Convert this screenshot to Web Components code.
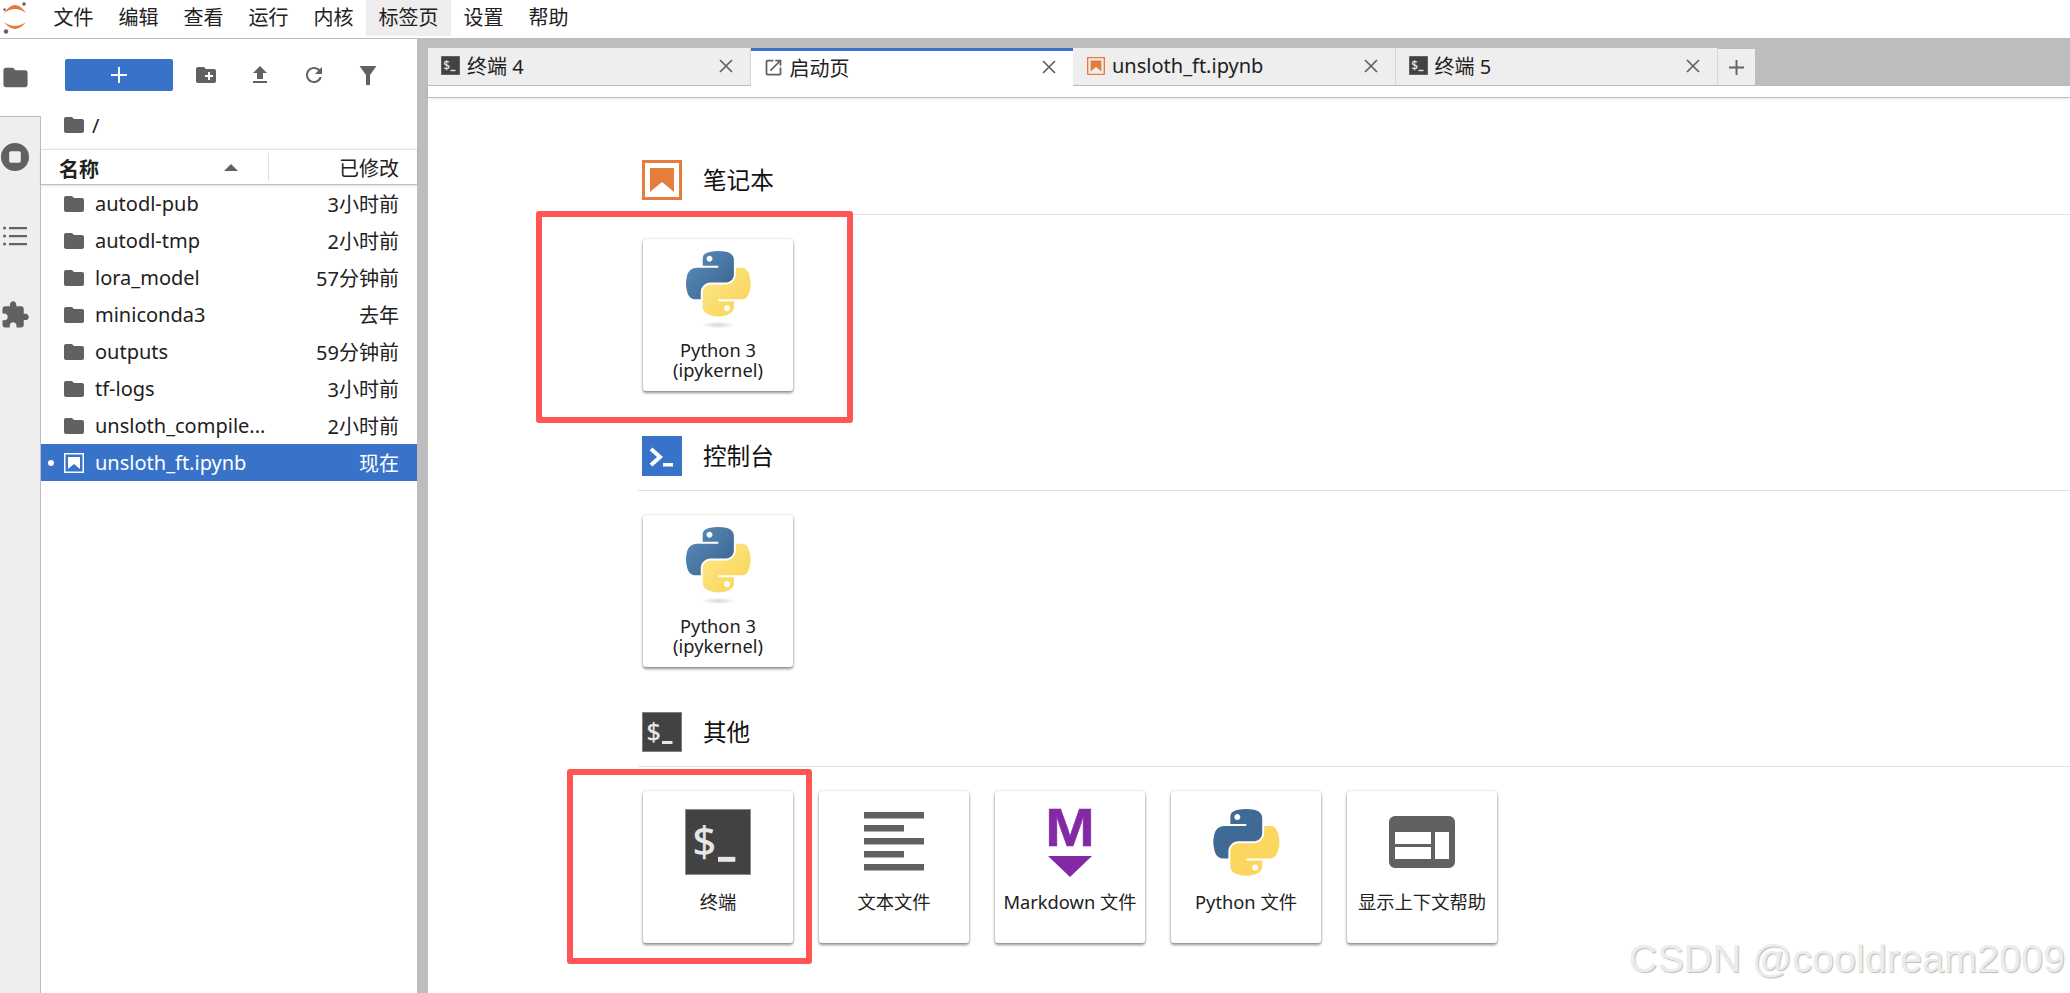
<!DOCTYPE html>
<html lang="zh">
<head>
<meta charset="utf-8">
<title>JupyterLab</title>
<style>
  html, body { margin: 0; height: 100%; }
  body {
    overflow: hidden;
    background: #fff;
    color: #212121;
    font-family: "Noto Sans", "Noto Sans CJK SC", sans-serif;
    font-size: 20px;
  }
</style>
</head>
<body>
<script>
const PY_BLUE = 'M54.92 0C50.34.02 45.96.41 42.11 1.09 30.76 3.1 28.7 7.29 28.7 15.03V25.25H55.51V28.66H18.64C10.85 28.66 4.02 33.34 1.89 42.25-.57 52.46-.68 58.84 1.89 69.5 3.79 77.44 8.35 83.09 16.14 83.09H25.36V70.84C25.36 62 33.01 54.19 42.11 54.19H68.89C76.34 54.19 82.29 48.05 82.29 40.56V15.03C82.29 7.77 76.16 2.31 68.89 1.09 64.28.33 59.5-.02 54.92 0ZM40.42 8.22C43.19 8.22 45.45 10.52 45.45 13.34 45.45 16.16 43.19 18.44 40.42 18.44 37.64 18.44 35.39 16.16 35.39 13.34 35.39 10.52 37.64 8.22 40.42 8.22Z';
const PY_YELLOW = 'M85.64 28.66V40.56C85.64 49.79 77.81 57.56 68.89 57.56H42.11C34.77 57.56 28.7 63.84 28.7 71.19V96.72C28.7 103.99 35.02 108.26 42.11 110.34 50.59 112.84 58.73 113.29 68.89 110.34 75.64 108.39 82.29 104.46 82.29 96.72V86.5H55.51V83.09H95.7C103.49 83.09 106.4 77.66 109.11 69.5 111.91 61.1 111.79 53.02 109.11 42.25 107.18 34.49 103.5 28.66 95.7 28.66ZM70.58 93.31C73.35 93.31 75.61 95.59 75.61 98.41 75.61 101.23 73.35 103.53 70.58 103.53 67.81 103.53 65.54 101.23 65.54 98.41 65.54 95.59 67.81 93.31 70.58 93.31Z';

const ICONS = {
  folder: `<svg viewBox="0 0 24 24"><path fill="#616161" d="M10 4H4c-1.1 0-2 .9-2 2v12c0 1.1.9 2 2 2h16c1.1 0 2-.9 2-2V8c0-1.1-.9-2-2-2h-8l-2-2z"/></svg>`,
  newfolder: `<svg viewBox="0 0 24 24"><path fill="#616161" d="M20 6h-8l-2-2H4c-1.11 0-2 .89-2 2v12c0 1.11.89 2 2 2h16c1.11 0 2-.89 2-2V8c0-1.11-.89-2-2-2zm-1 8h-3v3h-2v-3h-3v-2h3V9h2v3h3v2z"/></svg>`,
  upload: `<svg viewBox="0 0 24 24"><path fill="#616161" d="M9 16h6v-6h4l-7-7-7 7h4zm-4 2h14v2H5z"/></svg>`,
  refresh: `<svg viewBox="0 0 24 24"><path fill="#616161" d="M17.65 6.35C16.2 4.9 14.21 4 12 4c-4.42 0-7.99 3.58-7.99 8s3.57 8 7.99 8c3.73 0 6.84-2.55 7.73-6h-2.08c-.82 2.33-3.04 4-5.65 4-3.31 0-6-2.69-6-6s2.69-6 6-6c1.66 0 3.14.69 4.22 1.78L13 11h7V4l-2.35 2.35z"/></svg>`,
  filter: `<svg viewBox="0 0 24 24"><path fill="#616161" d="M3.500 3h17l-6.500 9V22h-4v-10z"/></svg>`,
  stop: `<svg viewBox="0 0 24 24"><path fill="#616161" fill-rule="evenodd" d="M12 0a12 12 0 1 0 0 24 12 12 0 0 0 0-24zM8.500 7h7c.8 0 1.500.7 1.500 1.500v7c0 .8-.7 1.500-1.500 1.500h-7c-.8 0-1.500-.7-1.500-1.500v-7C7 7.700 7.700 7 8.500 7z"/></svg>`,
  list: `<svg viewBox="0 0 24 24"><g fill="#616161"><circle cx="1.500" cy="4" r="1.500"/><circle cx="1.500" cy="12" r="1.500"/><circle cx="1.500" cy="20" r="1.500"/><rect x="6" y="3" width="18" height="2.200"/><rect x="6" y="11" width="18" height="2.200"/><rect x="6" y="19" width="18" height="2.200"/></g></svg>`,
  puzzle: `<svg viewBox="0 0 24 24"><path fill="#616161" d="M20.500 11H19V7c0-1.100-.9-2-2-2h-4V3.500C13 2.120 11.880 1 10.500 1S8 2.120 8 3.500V5H4c-1.100 0-1.990.9-1.990 2v3.800H3.500c1.490 0 2.700 1.210 2.700 2.700s-1.210 2.700-2.700 2.700H2V20c0 1.100.9 2 2 2h3.800v-1.500c0-1.490 1.210-2.700 2.700-2.700 1.490 0 2.700 1.210 2.700 2.700V22H17c1.100 0 2-.9 2-2v-4h1.500c1.380 0 2.500-1.120 2.500-2.500S21.880 11 20.500 11z"/></svg>`,
  launch: `<svg viewBox="0 0 24 24"><path fill="#616161" d="M19 19H5V5h7V3H5a2 2 0 0 0-2 2v14a2 2 0 0 0 2 2h14c1.100 0 2-.9 2-2v-7h-2v7zM14 3v2h3.590l-9.830 9.830 1.410 1.410L19 6.410V10h2V3h-7z"/></svg>`,
  close: `<svg viewBox="0 0 14 14"><path stroke="#616161" stroke-width="1.700" fill="none" d="M1 1l12 12M13 1L1 13"/></svg>`,
  plus: `<svg viewBox="0 0 16 16"><path fill="#616161" d="M7 0h2v7h7v2H9v7H7V9H0V7h7z"/></svg>`,
  pluswhite: `<svg viewBox="0 0 16 16"><path fill="#fff" d="M7 0h2v7h7v2H9v7H7V9H0V7h7z"/></svg>`,
  notebook: `<svg viewBox="0 0 40 40"><path fill="#e57e3c" fill-rule="evenodd" d="M0 0h40v40H0zM3 3v34h34V3z"/><path fill="#e57e3c" d="M8 8h24v24L20 22 8 32z"/></svg>`,
  notebookwhite: `<svg viewBox="0 0 40 40"><path fill="#fff" fill-rule="evenodd" d="M0 0h40v40H0zM3 3v34h34V3z"/><path fill="#fff" d="M8 8h24v24L20 22 8 32z"/></svg>`,
  console: `<svg viewBox="0 0 40 40"><rect width="40" height="40" fill="#3873c9"/><path fill="none" stroke="#fff" stroke-width="4" d="M9 13l9 8-9 8"/><rect x="21" y="27" width="10" height="3.500" fill="#fff"/></svg>`,
  terminal: `<svg viewBox="0 0 40 40"><rect x=".25" y=".25" width="39.500" height="39.500" fill="#424242" stroke="#8a8a8a" stroke-width=".5"/><text x="4.500" y="29" font-family="Noto Sans" font-weight="500" font-size="25" fill="#e6e6e6">$</text><rect x="20" y="29" width="10.500" height="3" fill="#e6e6e6"/></svg>`,
  textfile: `<svg viewBox="0 0 60 66"><g fill="#616161"><rect y="3" width="60" height="6.500"/><rect y="16" width="40" height="6.500"/><rect y="29" width="60" height="6.500"/><rect y="42" width="40" height="6.500"/><rect y="55" width="60" height="6.500"/></g></svg>`,
  markdown: `<svg viewBox="0 0 44 70"><text transform="translate(22 39) scale(1.100 1)" text-anchor="middle" font-family="Liberation Sans" font-weight="700" font-size="54" stroke="#8429a5" stroke-width=".6" fill="#8429a5">M</text><path fill="#8429a5" d="M0 49h44L22 70z"/></svg>`,
  pythonfile: `<svg viewBox="0 0 110 111"><path fill="#3f6a96" fill-rule="evenodd" d="${PY_BLUE}"/><path fill="#fbd75f" fill-rule="evenodd" d="${PY_YELLOW}"/></svg>`,
  help: `<svg viewBox="0 0 66 52"><path fill="#616161" fill-rule="evenodd" d="M6 0h54a6 6 0 0 1 6 6v40a6 6 0 0 1-6 6H6a6 6 0 0 1-6-6V6a6 6 0 0 1 6-6zM6 16v12h36V16zM6 31v12h36V31zM46 16v27h14V16z"/></svg>`,
  kernel: `<svg viewBox="0 0 110 134"><defs>
      <linearGradient id="b" x1="0" y1="0" x2="1" y2="1"><stop offset="0" stop-color="#5c8fc0"/><stop offset="1" stop-color="#386089"/></linearGradient>
      <linearGradient id="y" x1="0" y1="0" x2="1" y2="1"><stop offset="0" stop-color="#fde98c"/><stop offset="1" stop-color="#f9d253"/></linearGradient>
      <radialGradient id="s"><stop offset="0" stop-color="#bbb" stop-opacity=".6"/><stop offset="1" stop-color="#bbb" stop-opacity="0"/></radialGradient>
    </defs><path fill="url(#b)" fill-rule="evenodd" d="${PY_BLUE}"/><path fill="url(#y)" fill-rule="evenodd" d="${PY_YELLOW}"/><ellipse cx="55" cy="127" rx="30" ry="6" fill="url(#s)"/></svg>`,
  jupyter: `<svg viewBox="0 0 26 34"><g fill="#e5793a"><path d="M2 11Q13 -5 24 11 13 3 2 11z"/><path d="M2 20Q13 34 24 20 13 28 2 20z"/></g><g fill="#616161"><circle cx="22" cy="2" r="1.800"/><circle cx="4" cy="29.500" r="2.200"/><circle cx="2.500" cy="7.500" r="1.200"/></g></svg>`
};

function define(name, css, html, extra) {
  customElements.define(name, class extends HTMLElement {
    constructor() {
      super();
      this.attachShadow({ mode: 'open' }).innerHTML = `<style>${css}</style>${html}`;
    }
    connectedCallback() { if (extra) extra(this); }
  });
}

define('jl-icon', `:host{display:inline-flex;flex:none;align-items:center;justify-content:center} svg{display:block;width:100%;height:100%;overflow:visible}`, '', el => {
  const w = el.getAttribute('w') || 24;
  const h = el.getAttribute('h') || w;
  el.style.width = w + 'px';
  el.style.height = h + 'px';
  el.shadowRoot.innerHTML += ICONS[el.getAttribute('name')];
});

define('jl-app', `
  :host{display:flex;flex-direction:column;height:993px;width:2070px;position:relative;overflow:hidden}
  .body{flex:1;display:flex;min-height:0}
`, `<slot name="menu"></slot><div class="body"><slot></slot></div>`);

define('jl-menubar', `
  :host{display:flex;height:38px;border-bottom:1px solid #bdbdbd;background:#fff;box-sizing:content-box}
  .logo{width:41px;padding:2px 0 0 2px;box-sizing:border-box}
  .items{display:flex;height:36px}
`, `<div class="logo"><jl-icon name="jupyter" w="26" h="34"></jl-icon></div><div class="items"><slot></slot></div>`);

define('jl-menu-item', `
  :host{display:flex;align-items:center;padding:0 12.500px;height:36px;line-height:36px;white-space:nowrap}
  :host([active]){background:#eee}
`, `<slot></slot>`);

define('jl-sidebar', `
  :host{display:flex;flex-direction:column;width:40px;flex:none;background:#eee;border-right:1px solid #bdbdbd;box-sizing:content-box}
`, `<slot></slot>`);

define('jl-side-item', `
  :host{display:flex;align-items:center;justify-content:center;height:79px;width:30px;box-sizing:border-box;flex:none}
  :host([active]){background:#fff;width:41px;height:78px;border-bottom:1px solid #bdbdbd;padding-right:11px;margin-right:-1px}
`, `<slot></slot>`);

define('jl-files', `
  :host{display:flex;flex-direction:column;width:376px;flex:none;background:#fff}
  .tools{display:flex;align-items:center;height:32px;margin:20px 0 0 24px}
  .new{width:108px;height:32px;background:#3873c9;border-radius:2px;display:flex;align-items:center;justify-content:center;margin-right:6px}
  .tool{width:54px;display:flex;justify-content:center}
  .crumbs{display:flex;align-items:center;height:34px;margin-top:17px;padding-left:21px;gap:6px;margin-bottom:7px}
  .head{display:flex;align-items:center;height:34px;border-top:1px solid #e0e0e0;border-bottom:1px solid #bdbdbd;box-shadow:0 1px 3px rgba(0,0,0,.12);position:relative}
  .name{width:227px;flex:none;box-sizing:border-box;padding-left:18px;font-weight:700;display:flex;align-items:center;justify-content:space-between;padding-right:30px;height:28px}
  .name span:first-child{margin-top:3px}
  .caret{width:0;height:0;border:7px solid transparent;border-top:0;border-bottom:7px solid #616161}
  .mod{flex:1;text-align:right;padding-right:18px;border-left:1px solid #e0e0e0;height:28px;line-height:31px}
`, `
  <div class="tools">
    <div class="new"><jl-icon name="pluswhite" w="16"></jl-icon></div>
    <div class="tool"><jl-icon name="newfolder"></jl-icon></div>
    <div class="tool"><jl-icon name="upload"></jl-icon></div>
    <div class="tool"><jl-icon name="refresh"></jl-icon></div>
    <div class="tool"><jl-icon name="filter"></jl-icon></div>
  </div>
  <div class="crumbs"><jl-icon name="folder"></jl-icon><span>/</span></div>
  <div class="head">
    <div class="name"><span>名称</span><span class="caret"></span></div>
    <div class="mod">已修改</div>
  </div>
  <slot></slot>
`);

define('jl-file-row', `
  :host{display:flex;align-items:center;height:37px;padding:0 18px 0 21px;position:relative;white-space:nowrap}
  :host([selected]){background:#3873c9;color:#fff}
  :host([selected])::before{content:"";position:absolute;left:7px;top:16px;width:6px;height:6px;border-radius:50%;background:#fff}
  jl-icon{margin-right:9px}
  .n{flex:1}
`, `<jl-icon></jl-icon><span class="n"><slot></slot></span><slot name="time"></slot>`, el => {
  const ic = el.shadowRoot.querySelector('jl-icon');
  if (el.hasAttribute('selected')) { ic.setAttribute('name', 'notebookwhite'); ic.setAttribute('w', '20'); ic.style.margin = '0 11px 0 2px'; }
  else ic.setAttribute('name', 'folder');
});

define('jl-main', `
  :host{display:flex;flex-direction:column;flex:1;min-width:0;background:#bdbdbd;padding-left:11px}
`, `<slot></slot>`);

define('jl-tabbar', `
  :host{display:flex;height:37px;padding-top:9px;background:#bdbdbd;flex:none;box-sizing:content-box;border-bottom:1px solid #bdbdbd}
`, `<slot></slot>`);

define('jl-tab', `
  :host{display:flex;align-items:center;width:322.500px;height:37px;box-sizing:border-box;padding:0 17px 2px 13px;background:#eee;gap:7px;border-right:1px solid #d5d5d5;white-space:nowrap;flex:none}
  :host([active]){background:#fff;border-top:3px solid #3873c9;border-right:0;margin-bottom:-1px;height:38px;position:relative;padding-bottom:3px}
  .ic{width:19px;height:19px;display:flex;align-items:center;justify-content:center;flex:none}
  .t{flex:1}
`, `<span class="ic"><slot name="icon"></slot></span><span class="t"><slot></slot></span><jl-icon name="close" w="14"></jl-icon>`);

define('jl-tab-add', `
  :host{display:flex;align-items:center;justify-content:center;width:37px;height:36px;margin-top:1px;background:#eee;flex:none}
`, `<jl-icon name="plus" w="15"></jl-icon>`);

define('jl-launcher', `
  :host{display:block;flex:1;background:#fff;min-height:0}
  .strip{height:11px;border-bottom:1px solid #bdbdbd;box-shadow:0 1px 3px rgba(0,0,0,.1)}
  .wrap{padding:62px 0 0 210px}
`, `<div class="strip"></div><div class="wrap"><slot></slot></div>`);

define('jl-section', `
  :host{display:block;margin-bottom:45px}
  .head{display:flex;align-items:center;height:40px;padding:0 0 14px 4px;border-bottom:1px solid #e0e0e0;gap:21px;font-size:23.600px;color:#111}
  .h{margin-top:-2px}
  .cards{display:flex;gap:26px;padding:24px 0 0 5px}
`, `<div class="head"><slot name="icon"></slot><span class="h"></span></div><div class="cards"><slot></slot></div>`, el => {
  el.shadowRoot.querySelector('.h').textContent = el.getAttribute('label');
});

define('jl-card', `
  :host{display:flex;flex-direction:column;align-items:center;width:150px;height:152px;box-sizing:border-box;background:#fff;border-radius:3px;box-shadow:0 2px 3px rgba(0,0,0,.42),0 0 2px rgba(0,0,0,.22);flex:none}
  .ic{height:102px;display:flex;align-items:center;justify-content:center;flex:none}
  .l{font-size:18.300px;line-height:20px;text-align:center;white-space:nowrap;margin-top:-1px}
`, `<div class="ic"><slot name="icon"></slot></div><div class="l"><slot></slot></div>`);

define('jl-mark', `
  :host{position:absolute;box-sizing:border-box;border:6px solid #ff5555;border-radius:3px;pointer-events:none}
`, ``, el => {
  for (const k of ['left', 'top', 'width', 'height']) el.style[k] = el.getAttribute(k) + 'px';
});

define('jl-watermark', `
  :host{position:absolute;right:5px;top:936px;font-family:"Liberation Sans",sans-serif;font-size:39.600px;line-height:44px;color:#ececec;text-shadow:1px 1px 1px #bcbcbc;white-space:nowrap}
`, `<slot></slot>`);
</script>

<jl-app>
  <jl-menubar slot="menu">
    <jl-menu-item>文件</jl-menu-item>
    <jl-menu-item>编辑</jl-menu-item>
    <jl-menu-item>查看</jl-menu-item>
    <jl-menu-item>运行</jl-menu-item>
    <jl-menu-item>内核</jl-menu-item>
    <jl-menu-item active>标签页</jl-menu-item>
    <jl-menu-item>设置</jl-menu-item>
    <jl-menu-item>帮助</jl-menu-item>
  </jl-menubar>

  <jl-sidebar>
    <jl-side-item active><jl-icon name="folder" w="29"></jl-icon></jl-side-item>
    <jl-side-item><jl-icon name="stop" w="28"></jl-icon></jl-side-item>
    <jl-side-item><jl-icon name="list" w="24"></jl-icon></jl-side-item>
    <jl-side-item><jl-icon name="puzzle" w="30"></jl-icon></jl-side-item>
  </jl-sidebar>

  <jl-files>
    <jl-file-row>autodl-pub<span slot="time">3小时前</span></jl-file-row>
    <jl-file-row>autodl-tmp<span slot="time">2小时前</span></jl-file-row>
    <jl-file-row>lora_model<span slot="time">57分钟前</span></jl-file-row>
    <jl-file-row>miniconda3<span slot="time">去年</span></jl-file-row>
    <jl-file-row>outputs<span slot="time">59分钟前</span></jl-file-row>
    <jl-file-row>tf-logs<span slot="time">3小时前</span></jl-file-row>
    <jl-file-row>unsloth_compile...<span slot="time">2小时前</span></jl-file-row>
    <jl-file-row selected>unsloth_ft.ipynb<span slot="time">现在</span></jl-file-row>
  </jl-files>

  <jl-main>
    <jl-tabbar>
      <jl-tab><jl-icon slot="icon" name="terminal" w="19"></jl-icon>终端 4</jl-tab>
      <jl-tab active><jl-icon slot="icon" name="launch" w="21"></jl-icon>启动页</jl-tab>
      <jl-tab><jl-icon slot="icon" name="notebook" w="18"></jl-icon>unsloth_ft.ipynb</jl-tab>
      <jl-tab><jl-icon slot="icon" name="terminal" w="19"></jl-icon>终端 5</jl-tab>
      <jl-tab-add></jl-tab-add>
    </jl-tabbar>
    <jl-launcher>
      <jl-section label="笔记本">
        <jl-icon slot="icon" name="notebook" w="40"></jl-icon>
        <jl-card><jl-icon slot="icon" name="kernel" w="64" h="78"></jl-icon>Python 3<br>(ipykernel)</jl-card>
      </jl-section>
      <jl-section label="控制台">
        <jl-icon slot="icon" name="console" w="40"></jl-icon>
        <jl-card><jl-icon slot="icon" name="kernel" w="64" h="78"></jl-icon>Python 3<br>(ipykernel)</jl-card>
      </jl-section>
      <jl-section label="其他">
        <jl-icon slot="icon" name="terminal" w="40"></jl-icon>
        <jl-card><jl-icon slot="icon" name="terminal" w="66"></jl-icon>终端</jl-card>
        <jl-card><jl-icon slot="icon" name="textfile" w="60" h="66"></jl-icon>文本文件</jl-card>
        <jl-card><jl-icon slot="icon" name="markdown" w="44" h="70"></jl-icon>Markdown 文件</jl-card>
        <jl-card><jl-icon slot="icon" name="pythonfile" w="66"></jl-icon>Python 文件</jl-card>
        <jl-card><jl-icon slot="icon" name="help" w="66" h="52"></jl-icon>显示上下文帮助</jl-card>
      </jl-section>
    </jl-launcher>
  </jl-main>

  <jl-mark left="536" top="211" width="317" height="212"></jl-mark>
  <jl-mark left="567" top="769" width="245" height="195"></jl-mark>
  <jl-watermark>CSDN @cooldream2009</jl-watermark>
</jl-app>
</body>
</html>
